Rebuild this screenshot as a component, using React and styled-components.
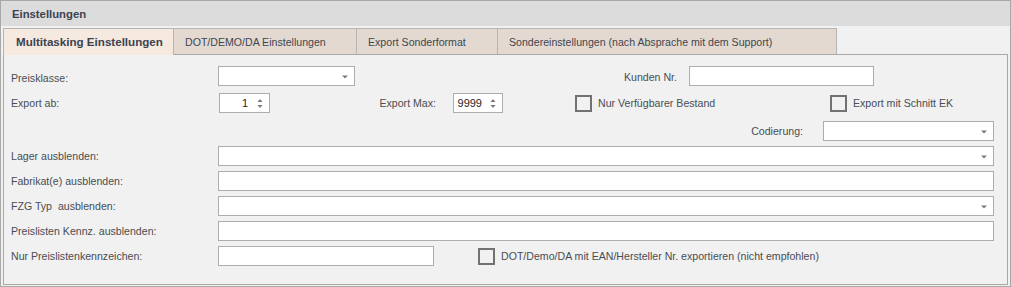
import React from 'react';
import styled, { createGlobalStyle } from 'styled-components';

const Global = createGlobalStyle`
  html, body { margin: 0; padding: 0; background: #ffffff; }
  body { font-family: "Liberation Sans", Arial, sans-serif; font-size: 10.6px; }
  * { box-sizing: border-box; }
`;

const Frame = styled.div`
  width: 1011px;
  height: 287px;
  border: 1px solid #a8a8a8;
  background: #f1f1f1;
  display: flex;
  flex-direction: column;
`;

const Header = styled.div`
  height: 25px;
  flex: none;
  background: #dcdcdc;
  display: flex;
  align-items: center;
  padding-left: 11px;
  font-weight: bold;
  font-size: 11.3px;
  color: #3b4351;
`;

const Body = styled.div`
  flex: 1;
  display: flex;
  flex-direction: column;
  padding: 2px 2px 1px 2px;
`;

const TabStrip = styled.div`
  display: flex;
  align-items: flex-end;
  height: 26px;
  flex: none;
`;

const Tab = styled.div`
  width: ${p => p.$w}px;
  height: ${p => (p.$active ? 27 : 26)}px;
  margin-right: -1px;
  margin-bottom: ${p => (p.$active ? -1 : 0)}px;
  position: relative;
  z-index: ${p => (p.$active ? 2 : 1)};
  border: 1px solid #b5b5b5;
  border-bottom: none;
  background: ${p => (p.$active ? '#f6e9e0' : '#e3d9d0')};
  color: ${p => (p.$active ? '#3b4351' : '#3f4650')};
  font-weight: ${p => (p.$active ? 'bold' : 'normal')};
  font-size: ${p => (p.$active ? '11.6px' : '10.6px')};
  padding-left: ${p => (p.$active ? 12 : 11)}px;
  padding-bottom: ${p => (p.$active ? 1 : 0)}px;
  display: flex;
  align-items: center;
  white-space: nowrap;
`;

const Panel = styled.div`
  flex: 1;
  border: 1px solid #a8a8a8;
  padding: 11px 13px 0 7px;
  display: flex;
  flex-direction: column;
  color: #4a4d52;
`;

const Row = styled.div`
  display: flex;
  align-items: center;
  height: 20px;
  margin-top: ${p => p.$mt || 0}px;
  justify-content: ${p => (p.$end ? 'flex-end' : 'flex-start')};
`;

const Label = styled.div`
  width: ${p => (p.$w ? `${p.$w}px` : 'auto')};
  flex: none;
  white-space: nowrap;
  text-align: ${p => (p.$right ? 'right' : 'left')};
  padding-right: ${p => p.$pr || 0}px;
  margin-top: ${p => p.$dy || 0}px;
`;

const Input = styled.div`
  height: 20px;
  width: ${p => (p.$w ? `${p.$w}px` : 'auto')};
  flex: ${p => (p.$w ? 'none' : '1')};
  margin-left: ${p => p.$ml || 0}px;
  border: 1px solid #adadad;
  background: #ffffff;
  position: relative;
  display: flex;
  align-items: center;
`;

const DropArrow = styled.svg`
  position: absolute;
  right: 6px;
  top: 8px;
`;

const SpinValue = styled.span`
  flex: 1;
  text-align: right;
  padding-right: ${p => p.$pr}px;
  color: #222222;
  font-size: 11px;
`;

const SpinArrows = styled.svg`
  position: absolute;
  right: 6px;
  top: 4px;
`;

const CheckGroup = styled.div`
  display: flex;
  align-items: center;
  width: ${p => (p.$w ? `${p.$w}px` : 'auto')};
  margin-left: ${p => p.$ml || 0}px;
  flex: none;
`;

const Box = styled.div`
  width: 17px;
  height: 17px;
  border: 2px solid #727272;
  margin-right: 6px;
  flex: none;
`;

const Combo = ({ w, ml }) => (
  <Input $w={w} $ml={ml}>
    <DropArrow width="6" height="4" viewBox="0 0 6 4">
      <path d="M0 0.5 H6 L3 3.5 Z" fill="#7a7a7a" />
    </DropArrow>
  </Input>
);

const Spinner = ({ w, ml, value, pr }) => (
  <Input $w={w} $ml={ml}>
    <SpinValue $pr={pr}>{value}</SpinValue>
    <SpinArrows width="6" height="11" viewBox="0 0 6 11">
      <path d="M3 1 L5.5 4 H0.5 Z" fill="#7a7a7a" />
      <path d="M0.5 7 H5.5 L3 10 Z" fill="#7a7a7a" />
    </SpinArrows>
  </Input>
);

const Check = ({ label, w, ml }) => (
  <CheckGroup $w={w} $ml={ml}>
    <Box />
    <span>{label}</span>
  </CheckGroup>
);

export default function App() {
  return (
    <>
      <Global />
      <Frame>
        <Header>Einstellungen</Header>
        <Body>
          <TabStrip>
            <Tab $w={171} $active>Multitasking Einstellungen</Tab>
            <Tab $w={184}>DOT/DEMO/DA Einstellungen</Tab>
            <Tab $w={142}>Export Sonderformat</Tab>
            <Tab $w={340}>Sondereinstellungen (nach Absprache mit dem Support)</Tab>
          </TabStrip>
          <Panel>
            <Row>
              <Label $w={207} $dy={3}>Preisklasse:</Label>
              <Combo w={137} />
              <Label $w={334} $right $pr={12} $dy={2}>Kunden Nr.</Label>
              <Input $w={185} />
            </Row>
            <Row $mt={7}>
              <Label $w={207}>Export ab:</Label>
              <Spinner w={51} ml={1} value="1" pr={21} />
              <Label $w={183} $right $pr={17}>Export Max:</Label>
              <Spinner w={50} value="9999" pr={20} />
              <Check label="Nur Verfügbarer Bestand" w={255} ml={72} />
              <Check label="Export mit Schnitt EK" />
            </Row>
            <Row $mt={8} $end>
              <Label $pr={20}>Codierung:</Label>
              <Combo w={171} />
            </Row>
            <Row $mt={5}>
              <Label $w={207}>Lager ausblenden:</Label>
              <Combo />
            </Row>
            <Row $mt={5}>
              <Label $w={207}>Fabrikat(e) ausblenden:</Label>
              <Input />
            </Row>
            <Row $mt={5}>
              <Label $w={207}>FZG Typ&nbsp; ausblenden:</Label>
              <Combo />
            </Row>
            <Row $mt={5}>
              <Label $w={207}>Preislisten Kennz. ausblenden:</Label>
              <Input />
            </Row>
            <Row $mt={5}>
              <Label $w={207}>Nur Preislistenkennzeichen:</Label>
              <Input $w={216} />
              <Check label="DOT/Demo/DA mit EAN/Hersteller Nr. exportieren (nicht empfohlen)" ml={44} />
            </Row>
          </Panel>
        </Body>
      </Frame>
    </>
  );
}
